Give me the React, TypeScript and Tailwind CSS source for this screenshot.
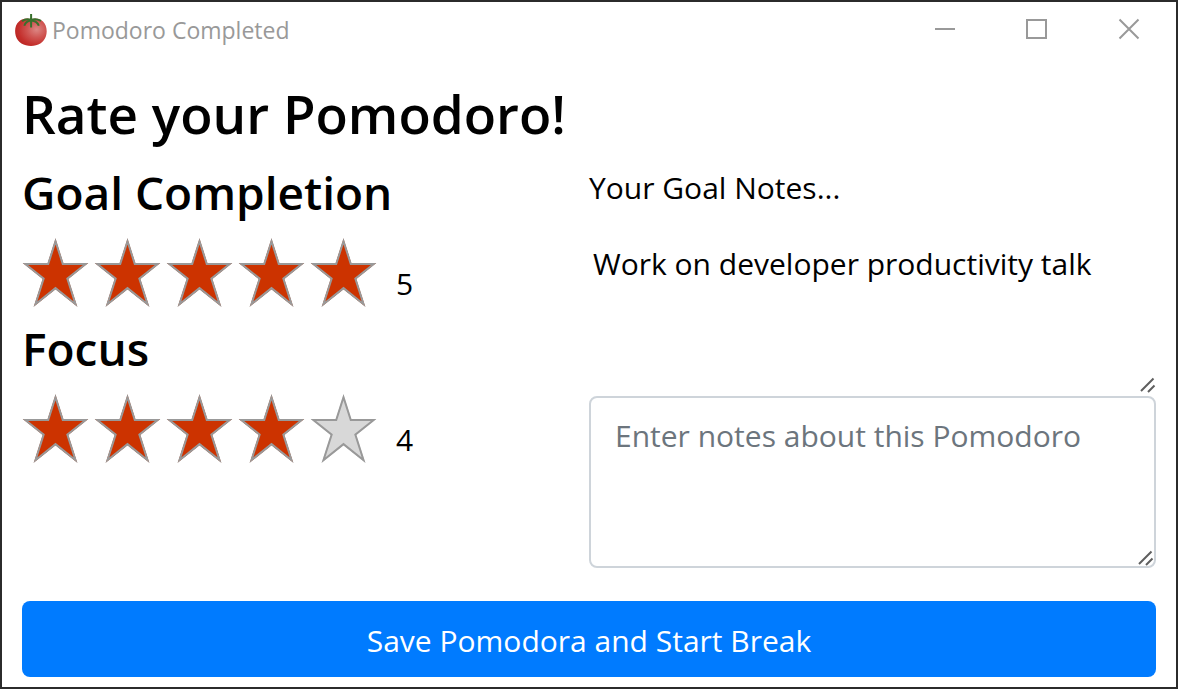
import { useState } from "react";

function TomatoIcon() {
  return (
    <svg className="h-8 w-8 shrink-0" viewBox="0 0 32 32" aria-hidden="true">
      <defs>
        <radialGradient id="tomato" cx="0.68" cy="0.4" r="0.75">
          <stop offset="0" stopColor="#dc8784" />
          <stop offset="0.4" stopColor="#cf5552" />
          <stop offset="0.75" stopColor="#c4302d" />
          <stop offset="1" stopColor="#b82320" />
        </radialGradient>
      </defs>
      <path
        d="M16 5.2C20 3.6 25 4.4 28 7.6C31.400 10.800 32.600 17 31 22C29 28.400 23 32 16 32C9 32 2.600 28.400 .8 22C-.8 16 .4 10.400 4 7.400C7.400 4.400 12 3.800 16 5.200Z"
        fill="url(#tomato)"
      />
      <path
        d="M16.100 0V13.500M16 5.800C12.500 4.800 9.500 5.300 7 7.200M16 5.800C19.500 4.800 22.500 4.900 26 6.800M15.500 6.500C12.500 7 10.300 8.500 9.300 11.800M16.500 6.500C19.800 7 22.800 8.200 23.800 11.800"
        fill="none"
        stroke="#38702c"
        strokeWidth="2"
      />
    </svg>
  );
}

const STAR = "33,0 41,25 66,25 46,41 55,69 33,51.4 11,69 20,41 0,25 25,25";

function Star({ filled }: { filled: boolean }) {
  return (
    <svg className="h-[70px] w-[67px]" viewBox="-0.5 0 67 70" aria-hidden="true">
      <clipPath id="star-outline">
        <polygon points={STAR} />
      </clipPath>
      <polygon
        points={STAR}
        clipPath="url(#star-outline)"
        fill={filled ? "#cc3300" : "#d8d8d8"}
        stroke="#999999"
        strokeWidth="4"
      />
    </svg>
  );
}

function Rating({ title, initial }: { title: string; initial: number }) {
  const [value, setValue] = useState(initial);
  return (
    <section className="h-[156px]">
      <h2 className="text-[46px] leading-[56px] font-semibold">{title}</h2>
      <div className="flex items-start pt-[18px]">
        <div className="flex gap-[5px]" role="group" aria-label={title}>
          {[1, 2, 3, 4, 5].map((n) => (
            <button
              key={n}
              type="button"
              aria-label={`${n} of 5`}
              aria-pressed={n === value}
              onClick={() => setValue(n)}
            >
              <Star filled={n <= value} />
            </button>
          ))}
        </div>
        <output className="ml-[19px] pt-[22px] text-[30px] leading-[48px]">{value}</output>
      </div>
    </section>
  );
}

function Grip({ className }: { className: string }) {
  return (
    <svg
      className={`pointer-events-none absolute h-4 w-4 ${className}`}
      viewBox="0 0 16 16"
      stroke="#5f5f5f"
      strokeWidth="2"
      aria-hidden="true"
    >
      <path d="M1 14L13.500 1.500M8 15L14.500 8.500" />
    </svg>
  );
}

export default function App() {
  return (
    <main className="flex min-h-screen flex-col border-2 border-[#2b2b2b] bg-white font-['Open_Sans','Noto_Sans',sans-serif] text-black">
      <header className="flex h-[54px] items-center justify-between pr-[34px] pl-[13px] text-[#999999]">
        <div className="flex items-center gap-[5px] pt-[2px]">
          <TomatoIcon />
          <span className="text-[23px] leading-8">Pomodoro Completed</span>
        </div>
        <div className="flex items-center gap-[66px]">
          <button type="button" aria-label="Minimize">
            <svg className="h-[26px] w-[26px]" viewBox="0 0 26 26" fill="none" stroke="currentColor" strokeWidth="2">
              <path d="M3 13H23" />
            </svg>
          </button>
          <button type="button" aria-label="Maximize">
            <svg className="h-[26px] w-[26px]" viewBox="0 0 26 26" fill="none" stroke="currentColor" strokeWidth="2">
              <path d="M3 4H22V22H3Z" />
            </svg>
          </button>
          <button type="button" aria-label="Close">
            <svg className="h-[26px] w-[26px]" viewBox="0 0 26 26" fill="none" stroke="currentColor" strokeWidth="2">
              <path d="M3.500 3.500L22.500 22.500M22.500 3.500L3.500 22.500" />
            </svg>
          </button>
        </div>
      </header>

      <form className="flex flex-1 flex-col px-5 pt-6 pb-[10px]" onSubmit={(e) => e.preventDefault()}>
        <h1 className="text-[53px] leading-[68px] font-semibold">Rate your Pomodoro!</h1>
        <div className="grid grid-cols-2 pt-4">
          <div>
            <Rating title="Goal Completion" initial={5} />
            <Rating title="Focus" initial={4} />
          </div>
          <div>
            <label htmlFor="goal-notes" className="block text-[30px] leading-[48px]">
              Your Goal Notes...
            </label>
            <div className="relative pt-6">
              <textarea
                id="goal-notes"
                defaultValue="Work on developer productivity talk"
                className="block h-[160px] w-full resize-none px-1 py-1 text-[30px] leading-[48px] outline-none"
              />
              <Grip className="right-0 bottom-[3px]" />
            </div>
            <div className="relative">
              <textarea
                aria-label="Pomodoro notes"
                placeholder="Enter notes about this Pomodoro"
                className="block h-[172px] w-full resize-none rounded-lg border-2 border-[#ced4da] px-6 py-[14px] text-[30px] leading-[48px] outline-none placeholder:text-[#6c757d]"
              />
              <Grip className="right-[2px] bottom-[2px]" />
            </div>
          </div>
        </div>
        <button
          type="submit"
          className="mt-auto h-[76px] w-full rounded-lg bg-[#007bff] pt-1 text-[30px] leading-[48px] text-white"
        >
          Save Pomodora and Start Break
        </button>
      </form>
    </main>
  );
}
